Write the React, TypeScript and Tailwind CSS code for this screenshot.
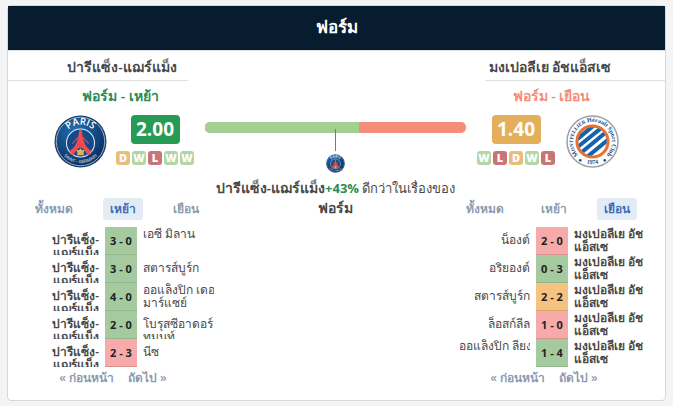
import React from "react";

type Outcome = "W" | "D" | "L";
type Cell = { lines: string[]; high?: boolean; bold?: boolean };
type Match = { home: Cell; score: string; away: Cell; outcome: Outcome };

const badgeColor: Record<Outcome, string> = {
  W: "bg-[#b3d6a5]",
  D: "bg-[#e9bd7c]",
  L: "bg-[#c97477]",
};

const scoreColor: Record<Outcome, string> = {
  W: "bg-[#a6ca9f] border-[#92b78c]",
  D: "bg-[#f5c27f] border-[#d9a96c]",
  L: "bg-[#f6abaa] border-[#d99290]",
};

const psg: Cell = { lines: ["ปารีแซ็ง-", "แฌร์แม็ง"], bold: true };
const mhsc: Cell = { lines: ["มงเปอลีเย อัช", "แอ็สเซ"], bold: true, high: true };

const homeMatches: Match[] = [
  { home: psg, score: "3 - 0", away: { lines: ["เอซี มิลาน"], high: true }, outcome: "W" },
  { home: psg, score: "3 - 0", away: { lines: ["สตารส์บูร์ก"] }, outcome: "W" },
  { home: psg, score: "4 - 0", away: { lines: ["ออแล็งปิก เดอ", "มาร์แซย์"], high: true }, outcome: "W" },
  { home: psg, score: "2 - 0", away: { lines: ["โบรุสซีอาดอร์", "ทมุนท์"] }, outcome: "W" },
  { home: psg, score: "2 - 3", away: { lines: ["นีซ"] }, outcome: "L" },
];

const awayMatches: Match[] = [
  { home: { lines: ["น็องต์"] }, score: "2 - 0", away: mhsc, outcome: "L" },
  { home: { lines: ["อริยองต์"] }, score: "0 - 3", away: mhsc, outcome: "W" },
  { home: { lines: ["สตารส์บูร์ก"] }, score: "2 - 2", away: mhsc, outcome: "D" },
  { home: { lines: ["ล็อสก์ลีล"] }, score: "1 - 0", away: mhsc, outcome: "L" },
  { home: { lines: ["ออแล็งปิก ลียง"], high: true }, score: "1 - 4", away: mhsc, outcome: "W" },
];

function ParisLogo({ className, id }: { className: string; id: string }) {
  return (
    <svg viewBox="0 0 104 104" className={className} role="img" aria-label="Paris">
      <defs>
        <radialGradient id={`${id}-blue`} cx="40%" cy="30%" r="75%">
          <stop offset="0" stopColor="#2273b3" />
          <stop offset="1" stopColor="#082a5c" />
        </radialGradient>
        <path id={`${id}-top`} d="M20 60 A33 33 0 1 1 84 60" />
        <path id={`${id}-bottom`} d="M9 58 A43.5 43.5 0 0 0 95 58" />
      </defs>
      <circle cx="52" cy="52" r="51" fill="#1b3f70" />
      <circle cx="52" cy="52" r="47.5" fill={`url(#${id}-blue)`} stroke="#c3ced9" strokeWidth="1.5" />
      <circle cx="52" cy="55" r="27.5" fill="#124b8c" stroke="#e9eef4" strokeWidth="2" />
      <path d="M50 29h4l3 16c3 13 8 20 17 26l-7 8c-7-7-9-15-15-15s-8 8-15 15l-7-8c9-6 14-13 17-26z" fill="#f04a4c" />
      <path d="M36 56L47 44M68 56L57 44" stroke="#f04a4c" strokeWidth="2" />
      <path d="M52 65l3 4 5-1-2 6 1 5H45l1-5-2-6 5 1z" fill="#d8b45e" />
      <text fill="#fff" fontFamily="Open Sans, sans-serif" fontSize="19" fontWeight="600">
        <textPath href={`#${id}-top`} startOffset="50%" textAnchor="middle">PARIS</textPath>
      </text>
      <text fill="#c3d0de" fontFamily="Open Sans, sans-serif" fontSize="9" fontWeight="600">
        <textPath href={`#${id}-bottom`} startOffset="50%" textAnchor="middle">SAINT - GERMAIN</textPath>
      </text>
    </svg>
  );
}

function MontpellierLogo({ className }: { className: string }) {
  return (
    <svg viewBox="0 0 104 104" className={className} role="img" aria-label="Montpellier Hérault Sport Club">
      <defs>
        <clipPath id="mhsc-inner">
          <circle cx="52" cy="52" r="28" />
        </clipPath>
        <path id="mhsc-ring" d="M28.5 82.4 A38.5 38.5 0 1 1 75.5 82.4" />
        <path id="mhsc-year" d="M32 92 A45 45 0 0 0 72 92" />
      </defs>
      <circle cx="52" cy="52" r="50" fill="#fff" stroke="#9ba1a5" strokeWidth="3" />
      <circle cx="52" cy="52" r="30.5" fill="#fff" stroke="#ec6f2d" strokeWidth="6" />
      <g clipPath="url(#mhsc-inner)" stroke="#1762ad" strokeWidth="8">
        <path d="M14 54L60 16M14 70L76 20M20 82L88 26M32 90L92 41" />
      </g>
      <text fill="#1c4b86" fontFamily="Liberation Serif, serif" fontSize="12" fontWeight="700">
        <textPath href="#mhsc-ring" startOffset="50%" textAnchor="middle">
          M<tspan fontSize="10">ONTPELLIER</tspan> Hérault Sport Club
        </textPath>
      </text>
      <text fill="#1c4b86" fontFamily="Liberation Serif, serif" fontSize="12" fontWeight="700">
        <textPath href="#mhsc-year" startOffset="50%" textAnchor="middle">1974</textPath>
      </text>
      <circle cx="28" cy="89" r="2.5" fill="#1c4b86" />
      <circle cx="76" cy="89" r="2.5" fill="#1c4b86" />
    </svg>
  );
}

function Rating({ value, color, form }: { value: string; color: string; form: Outcome[] }) {
  return (
    <div className="flex flex-col items-center gap-[7px]">
      <div className={`flex h-[29px] w-[49px] items-center justify-center rounded text-[19px] leading-[29px] font-bold text-white ${color}`}>
        {value}
      </div>
      <div className="flex gap-[2px]">
        {form.map((r, i) => (
          <span key={i} className={`flex h-[14px] w-[14px] items-center justify-center rounded-[3px] text-[11px] leading-[14px] font-extrabold text-white ${badgeColor[r]}`}>
            {r}
          </span>
        ))}
      </div>
    </div>
  );
}

function Tabs({ active }: { active: number }) {
  return (
    <div className="flex justify-between" role="tablist">
      {["ทั้งหมด", "เหย้า", "เยือน"].map((t, i) => (
        <button
          key={t}
          type="button"
          role="tab"
          aria-selected={i === active}
          className={`h-[22px] rounded-[3px] px-[7px] text-[12px] leading-[22px] font-semibold ${i === active ? "bg-[#e3ebf5] text-[#3c6cb8]" : "text-[#8d9bb0]"}`}
        >
          {t}
        </button>
      ))}
    </div>
  );
}

function TeamCell({ cell, right }: { cell: Cell; right?: boolean }) {
  return (
    <td className={`p-0 ${right ? "pr-[6px] text-right" : "pl-[6px] text-left"}`}>
      <div className={`h-7 overflow-hidden whitespace-nowrap ${cell.high ? "" : "pt-[6px]"} ${cell.bold ? "font-semibold" : ""}`}>
        {cell.lines.map((l) => (
          <div key={l}>{l}</div>
        ))}
      </div>
    </td>
  );
}

function Results({ matches }: { matches: Match[] }) {
  return (
    <table className="mt-[7px] w-full table-fixed border-collapse text-[12px] leading-[13px] text-[#484848]">
      <colgroup>
        <col />
        <col className="w-8" />
        <col />
      </colgroup>
      <tbody>
        {matches.map((m, i) => (
          <tr key={i} className="h-7">
            <TeamCell cell={m.home} right />
            <td className="p-0">
              <div className={`h-7 border-b text-center text-[11px] leading-[28px] font-bold text-[#222] ${scoreColor[m.outcome]}`}>{m.score}</div>
            </td>
            <TeamCell cell={m.away} />
          </tr>
        ))}
      </tbody>
    </table>
  );
}

function Pager() {
  return (
    <div className="flex justify-center gap-[14px] pr-4 text-[12px] leading-[22px] font-semibold text-[#8d9bb0]">
      <a href="#prev">« ก่อนหน้า</a>
      <a href="#next">ถัดไป »</a>
    </div>
  );
}

export default function App() {
  return (
    <div className="bg-[#f4f4f4] px-[7px] py-[5px] font-['Open_Sans','Noto_Sans',sans-serif] text-[#484848]">
      <section className="rounded-[4px] border border-[#d6d8da] bg-white">
        <h2 className="h-[45px] border-b border-[#dde0e2] bg-[#071c2f] text-center text-[17px] leading-[42px] font-bold text-white">ฟอร์ม</h2>
        <div className="flex pb-[11px]">
          <div className="w-[205px] shrink-0">
            <h3 className="mr-[25px] h-[30px] border-b border-[#dfe1e3] pl-12 text-center text-[14px] leading-[32px] font-semibold">ปารีแซ็ง-แฌร์แม็ง</h3>
            <p className="h-[34px] pl-5 text-center text-[14px] leading-[30px] font-semibold text-[#2e8b57]">ฟอร์ม - เหย้า</p>
            <div className="flex gap-[9px] pl-[46px]">
              <ParisLogo id="paris-large" className="size-[53px] shrink-0" />
              <Rating value="2.00" color="bg-[#279b53]" form={["D", "W", "L", "W", "W"]} />
            </div>
            <div className="-mr-px ml-5 pt-[30px]">
              <div className="pr-2"><Tabs active={1} /></div>
              <Results matches={homeMatches} />
              <Pager />
            </div>
          </div>

          <div className="min-w-0 flex-1 pt-[71px] text-center">
            <div className="-mx-2 flex h-[11px] overflow-hidden rounded-[5px] bg-[#f58d78]">
              <div className="w-[59%] bg-[#a3cf92]" />
            </div>
            <div className="relative z-10 mx-auto -mt-1 h-[22px] w-px bg-[#777]" />
            <ParisLogo id="paris-small" className="mx-auto mt-[3px] size-[19px]" />
            <p className="mt-[5px] text-[13px] leading-5 whitespace-nowrap">
              <strong className="text-[14px] font-semibold">ปารีแซ็ง-แฌร์แม็ง</strong>
              <strong className="font-bold text-[#2e8b57]">+43%</strong> ดีกว่าในเรื่องของ
              <br />
              <strong className="text-[14px] font-semibold">ฟอร์ม</strong>
            </p>
          </div>

          <div className="w-[207px] shrink-0">
            <h3 className="ml-[27px] h-[30px] border-b border-[#dfe1e3] pr-[50px] text-center text-[14px] leading-[32px] font-semibold">มงเปอลีเย อัชแอ็สเซ</h3>
            <p className="h-[34px] pr-5 text-center text-[14px] leading-[30px] font-semibold text-[#f58d78]">ฟอร์ม - เยือน</p>
            <div className="flex justify-end gap-[11px] pr-[46px]">
              <Rating value="1.40" color="bg-[#e4af5d]" form={["W", "L", "D", "W", "L"]} />
              <MontpellierLogo className="size-[53px] shrink-0" />
            </div>
            <div className="mr-5 ml-px pt-[30px]">
              <div className="pr-2"><Tabs active={2} /></div>
              <Results matches={awayMatches} />
              <Pager />
            </div>
          </div>
        </div>
      </section>
    </div>
  );
}
